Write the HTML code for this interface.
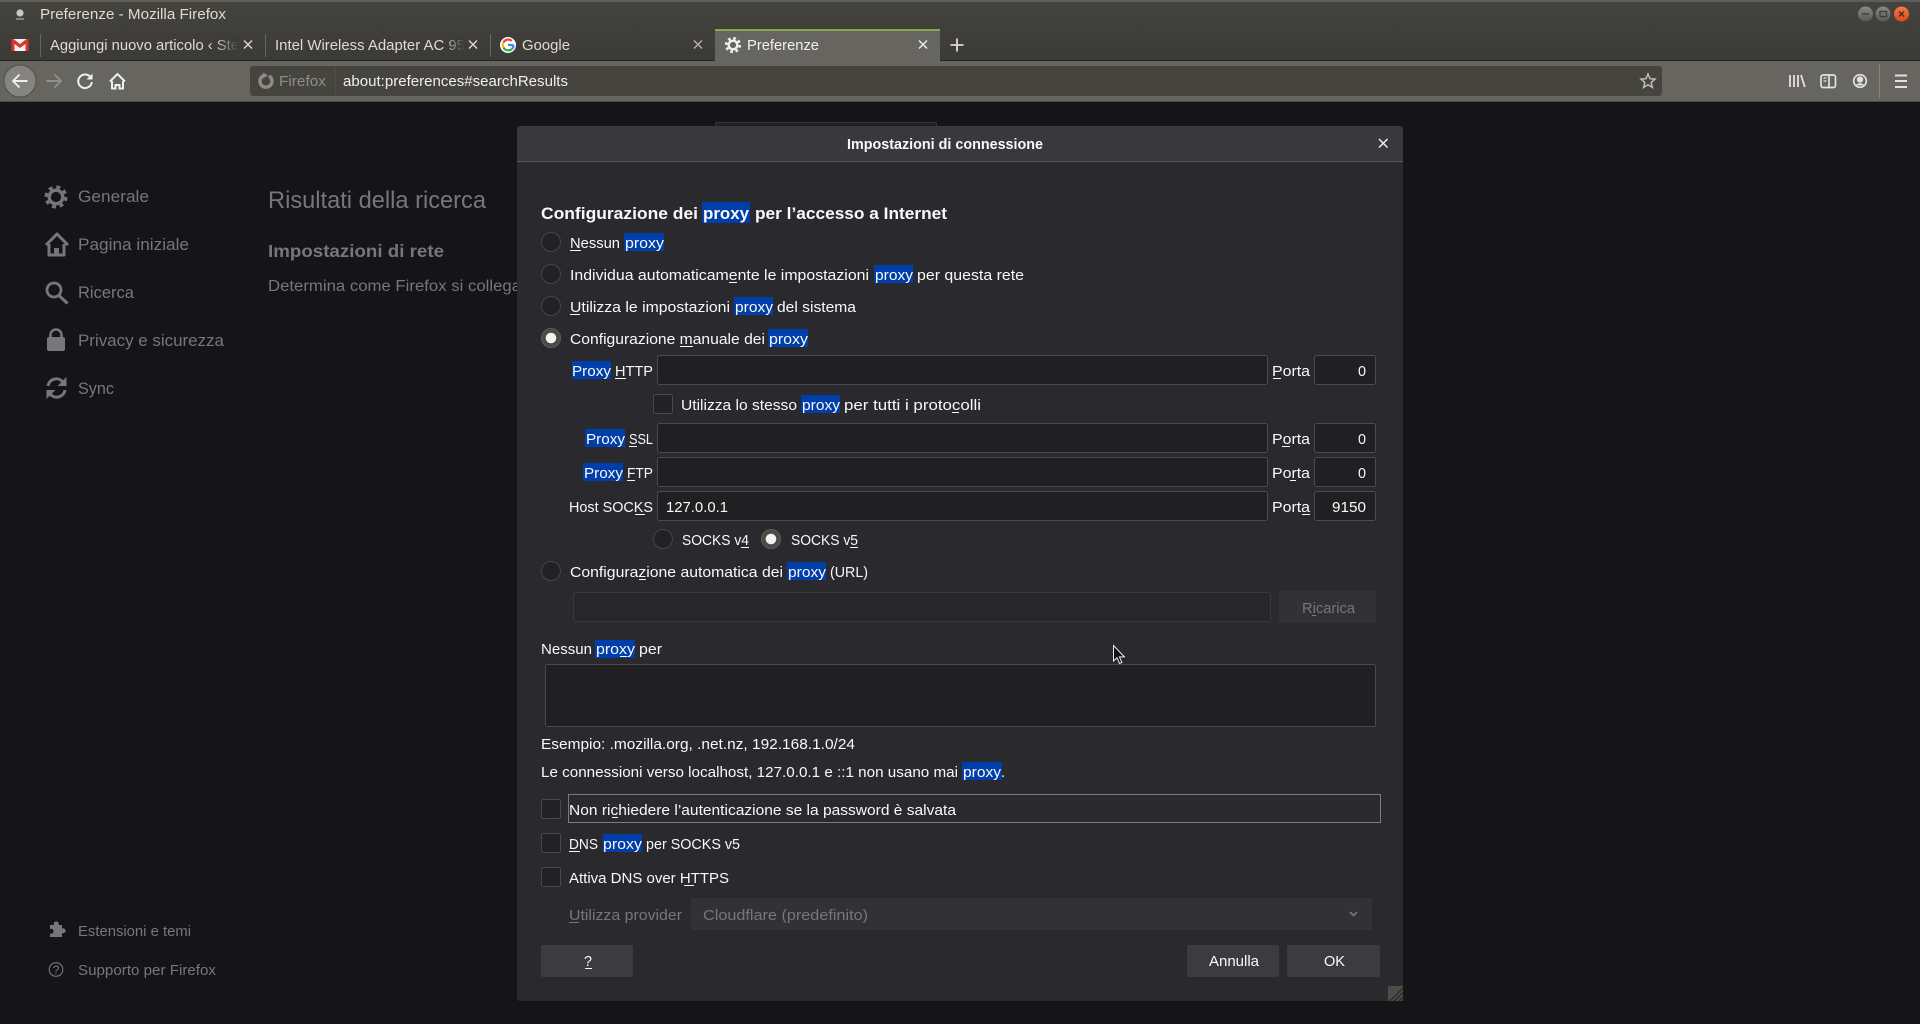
<!DOCTYPE html>
<html lang="it"><head><meta charset="utf-8"><title>Preferenze - Mozilla Firefox</title>
<style>
html,body{margin:0;padding:0;background:#151517;width:1920px;height:1024px;overflow:hidden}
svg{display:block;position:absolute;left:0;top:0}
text{font-family:"Liberation Sans",sans-serif;font-size:15px;fill:#f9f9fa;white-space:pre}
.s{fill:#77777b;font-size:16.5px}
.sm{fill:#77777b;font-size:14.5px}
.t{fill:#dfdbd2;font-size:14.5px}
.b{font-weight:bold}
.h{fill:#003eaa}
.in{fill:#202023;stroke:#4a4a4f}
.dis{fill:#77777b}
.rd{fill:#222225;stroke:#46464a}
.cb{fill:#222225;stroke:#4a4a4e}
.u{fill:#f9f9fa}
</style></head><body>
<svg width="1920" height="1024" viewBox="0 0 1920 1024" xmlns="http://www.w3.org/2000/svg" lengthAdjust="spacingAndGlyphs">
<defs>
<linearGradient id="tb" x1="0" y1="0" x2="0" y2="1"><stop offset="0" stop-color="#45443f"/><stop offset="1" stop-color="#3b3a36"/></linearGradient>
<linearGradient id="fd" x1="0" y1="0" x2="1" y2="0"><stop offset="0" stop-color="#3c3b37" stop-opacity="0"/><stop offset="1" stop-color="#3c3b37"/></linearGradient>
<linearGradient id="wb" x1="0" y1="0" x2="0" y2="1"><stop offset="0" stop-color="#8a8985"/><stop offset="1" stop-color="#5a5954"/></linearGradient>
<linearGradient id="wc" x1="0" y1="0" x2="0" y2="1"><stop offset="0" stop-color="#f47a45"/><stop offset="1" stop-color="#db4a1c"/></linearGradient>
</defs>

<!-- page -->
<rect width="1920" height="1024" fill="#151517"/>

<!-- title bar -->
<rect width="1920" height="61" fill="url(#tb)"/>
<rect width="1920" height="2" y="0" fill="#5e5d58"/>
<circle cx="20" cy="13" r="3.6" fill="#c8c6c0"/><path d="M16 19h8" stroke="#85837d" stroke-width="2"/>
<text x="40" y="19" class="t" textLength="186" lengthAdjust="spacingAndGlyphs">Preferenze - Mozilla Firefox</text>
<circle cx="1865.5" cy="14" r="7.5" fill="url(#wb)"/><path d="M1862 14h7" stroke="#3c3b37" stroke-width="1.4"/>
<circle cx="1883" cy="14" r="7.5" fill="url(#wb)"/><rect x="1880" y="11.5" width="6.5" height="5" fill="none" stroke="#3c3b37" stroke-width="1.2"/>
<circle cx="1901.5" cy="14" r="7.5" fill="url(#wc)"/><path d="M1899 11.5l5 5M1904 11.5l-5 5" stroke="#3c2a20" stroke-width="1.3"/>

<!-- tabs -->
<rect x="13" y="39" width="15" height="12" fill="#f2f2f2"/><path d="M13 39v12h3v-7l5.500 4 5.500-4v7h3v-12h-2l-6.500 5-6.500-5z" fill="#d9372b" transform="translate(-1.500 0)"/>
<rect x="40" y="34" width="1" height="23" fill="#66655f"/>
<rect x="265" y="34" width="1" height="23" fill="#66655f"/>
<rect x="490" y="34" width="1" height="23" fill="#66655f"/>
<text x="50" y="50" class="t" textLength="189" lengthAdjust="spacingAndGlyphs">Aggiungi nuovo articolo ‹ Ste</text>
<rect x="214" y="34" width="25" height="24" fill="url(#fd)"/>
<path d="M244 40.500l8 8M252 40.500l-8 8" stroke="#dfdbd2" stroke-width="1.400"/>
<text x="275" y="50" class="t" textLength="190" lengthAdjust="spacingAndGlyphs">Intel Wireless Adapter AC 95</text>
<rect x="443" y="34" width="22" height="24" fill="url(#fd)"/>
<path d="M469 40.500l8 8M477 40.500l-8 8" stroke="#dfdbd2" stroke-width="1.400"/>
<circle cx="508" cy="45" r="8" fill="#fff"/>
<path d="M508 39.500a5.500 5.500 0 0 1 3.800 1.500" fill="none" stroke="#ea4335" stroke-width="2.200"/>
<path d="M503.500 42.500a5.500 5.500 0 0 1 4.500-3" fill="none" stroke="#ea4335" stroke-width="2.200"/>
<path d="M503.500 47.500a5.500 5.500 0 0 1 0-5" fill="none" stroke="#fbbc05" stroke-width="2.200"/>
<path d="M512 49a5.500 5.500 0 0 1-8.500-1.500" fill="none" stroke="#34a853" stroke-width="2.200"/>
<path d="M513.500 45a5.500 5.500 0 0 1-1.500 4M508 45h5.500" fill="none" stroke="#4285f4" stroke-width="2.200"/>
<text x="522" y="50" class="t" textLength="48" lengthAdjust="spacingAndGlyphs">Google</text>
<path d="M694 40.500l8 8M702 40.500l-8 8" stroke="#b5b2aa" stroke-width="1.400"/>

<rect x="715" y="29" width="225" height="33" fill="#666560"/>
<rect x="715" y="29" width="225" height="2" fill="#87a64f"/>
<g transform="translate(733 45)"><circle r="4.300" fill="none" stroke="#efefef" stroke-width="2.400"/><circle r="6.800" fill="none" stroke="#efefef" stroke-width="2.600" stroke-dasharray="2.670 2.670"/></g>
<text x="747" y="50" class="t" textLength="72" lengthAdjust="spacingAndGlyphs" style="fill:#f2f1ed">Preferenze</text>
<path d="M919 40.500l8 8M927 40.500l-8 8" stroke="#efefef" stroke-width="1.400"/>
<path d="M950.500 45h13M957 38.500v13" stroke="#dfdbd2" stroke-width="1.800"/>

<!-- toolbar -->
<rect y="60" width="715" height="1" fill="#262522"/>
<rect x="940" y="60" width="980" height="1" fill="#262522"/>
<rect y="61" width="1920" height="40" fill="#666560"/>
<rect y="101" width="1920" height="1" fill="#4c4b47"/>
<circle cx="20" cy="81" r="16" fill="#85847f" stroke="#4f4e49"/>
<path d="M27.500 81h-14M19.500 74.500l-6.500 6.500 6.500 6.500" fill="none" stroke="#f0efeb" stroke-width="1.900"/>
<path d="M60.500 81h-14M54.500 74.500l6.500 6.500-6.500 6.500" fill="none" stroke="#908f8a" stroke-width="1.900"/>
<path d="M91 78a6.800 6.800 0 1 0 .8 4" fill="none" stroke="#efefeb" stroke-width="2"/><path d="M92.500 73.500v6h-6z" fill="#efefeb"/>
<path d="M110 81.500l7.500-7.500 7.500 7.500M112 81v7.500h3.500v-3.500h4v3.500h3.500v-7.500" fill="none" stroke="#efefeb" stroke-width="2"/>

<rect x="250" y="66" width="1412" height="30" rx="3" fill="#45443f"/>
<path d="M264 75.500a6 6 0 1 0 5 .5" fill="none" stroke="#8c8b86" stroke-width="3.500"/><path d="M263 72.500l5 3-5 3z" fill="#8c8b86"/>
<text x="279" y="86" class="t" textLength="47" lengthAdjust="spacingAndGlyphs" style="fill:#8f8e89">Firefox</text>
<rect x="335" y="68" width="1" height="26" fill="#4f4e49"/>
<text x="343" y="86" class="t" textLength="225" lengthAdjust="spacingAndGlyphs" style="fill:#f0efeb">about:preferences#searchResults</text>
<path d="M1648 74l2 4.700 5 .4-3.800 3.300 1.200 5-4.400-2.700-4.400 2.700 1.200-5-3.800-3.300 5-.4z" fill="none" stroke="#bdbcb7" stroke-width="1.500"/>

<path d="M1790 75v12M1794 75v12M1798 75v12M1801 75l3.800 12" stroke="#e2e1dd" stroke-width="1.800" fill="none"/>
<rect x="1821" y="75" width="14.500" height="12.500" rx="2" fill="none" stroke="#e2e1dd" stroke-width="1.700"/><path d="M1829 75v12.500" stroke="#e2e1dd" stroke-width="1.700"/><path d="M1823.500 78h3M1823.500 81h3" stroke="#e2e1dd" stroke-width="1.300"/>
<circle cx="1860" cy="81" r="6.300" fill="none" stroke="#e2e1dd" stroke-width="1.700"/><circle cx="1860" cy="79.500" r="3.200" fill="#e2e1dd"/><path d="M1855.500 85.500a5 4 0 0 1 9 0z" fill="#e2e1dd"/>
<rect x="1879" y="64" width="1" height="34" fill="#85847f"/>
<path d="M1895 75.500h12M1895 81h12M1895 87h12" stroke="#e2e1dd" stroke-width="1.900"/>

<!-- sidebar -->
<g transform="translate(56 197)"><circle r="6.800" fill="none" stroke="#77777b" stroke-width="3.400"/><circle r="10" fill="none" stroke="#77777b" stroke-width="3" stroke-dasharray="3.930 3.930"/></g>
<text x="78" y="202" class="s" textLength="71" lengthAdjust="spacingAndGlyphs">Generale</text>
<path d="M46 245l11-11 11 11M49 244v11h15v-11" fill="none" stroke="#77777b" stroke-width="3" stroke-linejoin="round"/><rect x="54" y="248" width="5" height="7" fill="#77777b"/>
<text x="78" y="250" class="s" textLength="111" lengthAdjust="spacingAndGlyphs">Pagina iniziale</text>
<circle cx="54" cy="290" r="7" fill="none" stroke="#77777b" stroke-width="2.800"/><path d="M59 295.500l8.500 8" stroke="#77777b" stroke-width="3"/>
<text x="78" y="298" class="s" textLength="56" lengthAdjust="spacingAndGlyphs">Ricerca</text>
<rect x="47" y="337" width="18" height="14" rx="2" fill="#77777b"/><path d="M50.500 338v-3a5.500 5.500 0 0 1 11 0v3" fill="none" stroke="#77777b" stroke-width="2.600"/>
<text x="78" y="346" class="s" textLength="146" lengthAdjust="spacingAndGlyphs">Privacy e sicurezza</text>
<path d="M48 386a8.500 8.500 0 0 1 15-4" fill="none" stroke="#77777b" stroke-width="3"/><path d="M66.500 377v9h-9z" fill="#77777b"/>
<path d="M65 390a8.500 8.500 0 0 1-15 4" fill="none" stroke="#77777b" stroke-width="3"/><path d="M46.500 399v-9h9z" fill="#77777b"/>
<text x="78" y="394" class="s" textLength="36" lengthAdjust="spacingAndGlyphs">Sync</text>

<text x="268" y="208" textLength="218" lengthAdjust="spacingAndGlyphs" style="font-size:24px;fill:#77777b">Risultati della ricerca</text>
<text x="268" y="257" class="b" textLength="176" lengthAdjust="spacingAndGlyphs" style="font-size:17.500px;fill:#77777b">Impostazioni di rete</text>
<text x="268" y="291" textLength="253" lengthAdjust="spacingAndGlyphs" style="font-size:15.500px;fill:#77777b">Determina come Firefox si collega</text>

<path d="M50 925h4a2.500 2.500 0 1 1 4.500 0h3.500v3.500a2.500 2.500 0 1 1 0 4.500v4h-12v-3.500a2.500 2.500 0 1 0 0-4.500z" fill="#77777b"/>
<text x="78" y="936" class="sm" textLength="113" lengthAdjust="spacingAndGlyphs">Estensioni e temi</text>
<circle cx="56" cy="969.500" r="6.800" fill="none" stroke="#77777b" stroke-width="1.100"/>
<text x="52.700" y="974" style="font-size:12px;fill:#77777b">?</text>
<text x="78" y="975" class="sm" textLength="138" lengthAdjust="spacingAndGlyphs">Supporto per Firefox</text>

<!-- box behind dialog -->
<rect x="715.500" y="122.500" width="221" height="20" rx="2" fill="#202023" stroke="#38383d"/>

<!-- dialog -->
<rect x="517" y="126" width="886" height="875" rx="3" fill="#2a2a2e"/>
<path d="M517 161v-32a3 3 0 0 1 3-3h880a3 3 0 0 1 3 3v32z" fill="#38383d"/>
<rect x="517" y="161" width="886" height="1" fill="#57575b"/>
<text x="847" y="149" class="b" textLength="196" lengthAdjust="spacingAndGlyphs" style="font-size:14.500px">Impostazioni di connessione</text>
<path d="M1379 139l8.500 8.500M1387.500 139l-8.500 8.500" stroke="#f0f0f1" stroke-width="1.500"/>

<!-- highlights -->
<rect class="h" x="702" y="202" width="48" height="21"/>
<rect class="h" x="624" y="233" width="40" height="18"/>
<rect class="h" x="874" y="265" width="39" height="18"/>
<rect class="h" x="734" y="297" width="39" height="18"/>
<rect class="h" x="768" y="329" width="40" height="18"/>
<rect class="h" x="572" y="361" width="39" height="18"/>
<rect class="h" x="801" y="395" width="39" height="18"/>
<rect class="h" x="585" y="429" width="40" height="18"/>
<rect class="h" x="583" y="463" width="40" height="18"/>
<rect class="h" x="787" y="562" width="39" height="18"/>
<rect class="h" x="595" y="640" width="40" height="18"/>
<rect class="h" x="962" y="762" width="40" height="18"/>
<rect class="h" x="603" y="834" width="39" height="18"/>

<g class="b">
<text class="b" x="541" y="219" textLength="157" lengthAdjust="spacingAndGlyphs" style="font-size:17px">Configurazione dei</text>
<text class="b" x="703" y="219" textLength="46" lengthAdjust="spacingAndGlyphs" style="font-size:17px">proxy</text>
<text class="b" x="755" y="219" textLength="192" lengthAdjust="spacingAndGlyphs" style="font-size:17px">per l’accesso a Internet</text>
</g>

<!-- radios -->
<circle class="rd" cx="551" cy="242" r="9.500"/>
<circle class="rd" cx="551" cy="274" r="9.500"/>
<circle class="rd" cx="551" cy="306" r="9.500"/>
<circle cx="551" cy="338" r="9.500" fill="#4b4a45" stroke="#5c5b57"/><circle cx="551" cy="338" r="5.300" fill="#f2f2f2"/>

<text x="570" y="248" textLength="50" lengthAdjust="spacingAndGlyphs">Nessun</text>
<text x="625" y="248" textLength="39" lengthAdjust="spacingAndGlyphs">proxy</text>
<rect class="u" x="570" y="250" width="11" height="1"/>
<text x="570" y="280" textLength="299" lengthAdjust="spacingAndGlyphs">Individua automaticamente le impostazioni</text>
<text x="875" y="280" textLength="38" lengthAdjust="spacingAndGlyphs">proxy</text>
<text x="917" y="280" textLength="107" lengthAdjust="spacingAndGlyphs">per questa rete</text>
<rect class="u" x="729" y="282" width="8" height="1"/>
<text x="570" y="312" textLength="160" lengthAdjust="spacingAndGlyphs">Utilizza le impostazioni</text>
<text x="735" y="312" textLength="38" lengthAdjust="spacingAndGlyphs">proxy</text>
<text x="777" y="312" textLength="79" lengthAdjust="spacingAndGlyphs">del sistema</text>
<rect class="u" x="570" y="314" width="10" height="1"/>
<text x="570" y="344" textLength="195" lengthAdjust="spacingAndGlyphs">Configurazione manuale dei</text>
<text x="769" y="344" textLength="39" lengthAdjust="spacingAndGlyphs">proxy</text>
<rect class="u" x="680" y="346" width="13" height="1"/>

<!-- proxy rows -->
<text x="572" y="376" textLength="39" lengthAdjust="spacingAndGlyphs">Proxy</text>
<text x="615" y="376" textLength="38" lengthAdjust="spacingAndGlyphs">HTTP</text>
<rect class="u" x="615" y="378" width="11" height="1"/>
<rect class="in" x="657.500" y="355.500" width="610" height="29" rx="2"/>
<text x="1272" y="376" textLength="38" lengthAdjust="spacingAndGlyphs">Porta</text>
<rect class="u" x="1273" y="378" width="8" height="1"/>
<rect class="in" x="1314.500" y="355.500" width="61" height="29" rx="2"/>
<text x="1358" y="376" textLength="8" lengthAdjust="spacingAndGlyphs">0</text>

<rect class="cb" x="653.500" y="394.500" width="19" height="19" rx="2"/>
<text x="681" y="410" textLength="116" lengthAdjust="spacingAndGlyphs">Utilizza lo stesso</text>
<text x="802" y="410" textLength="38" lengthAdjust="spacingAndGlyphs">proxy</text>
<text x="844" y="410" textLength="137" lengthAdjust="spacingAndGlyphs">per tutti i protocolli</text>
<rect class="u" x="952" y="412" width="7" height="1"/>

<text x="586" y="444" textLength="39" lengthAdjust="spacingAndGlyphs">Proxy</text>
<text x="629" y="444" textLength="24" lengthAdjust="spacingAndGlyphs">SSL</text>
<rect class="u" x="629" y="446" width="8" height="1"/>
<rect class="in" x="657.500" y="423.500" width="610" height="29" rx="2"/>
<text x="1272" y="444" textLength="38" lengthAdjust="spacingAndGlyphs">Porta</text>
<rect class="u" x="1282" y="446" width="8" height="1"/>
<rect class="in" x="1314.500" y="423.500" width="61" height="29" rx="2"/>
<text x="1358" y="444" textLength="8" lengthAdjust="spacingAndGlyphs">0</text>

<text x="584" y="478" textLength="39" lengthAdjust="spacingAndGlyphs">Proxy</text>
<text x="627" y="478" textLength="26" lengthAdjust="spacingAndGlyphs">FTP</text>
<rect class="u" x="627" y="480" width="8" height="1"/>
<rect class="in" x="657.500" y="457.500" width="610" height="29" rx="2"/>
<text x="1272" y="478" textLength="38" lengthAdjust="spacingAndGlyphs">Porta</text>
<rect class="u" x="1290" y="480" width="6" height="1"/>
<rect class="in" x="1314.500" y="457.500" width="61" height="29" rx="2"/>
<text x="1358" y="478" textLength="8" lengthAdjust="spacingAndGlyphs">0</text>

<text x="569" y="512" textLength="84" lengthAdjust="spacingAndGlyphs">Host SOCKS</text>
<rect class="u" x="635" y="514" width="10" height="1"/>
<rect class="in" x="657.500" y="491.500" width="610" height="29" rx="2"/>
<text x="666" y="512" textLength="62" lengthAdjust="spacingAndGlyphs">127.0.0.1</text>
<text x="1272" y="512" textLength="38" lengthAdjust="spacingAndGlyphs">Porta</text>
<rect class="u" x="1302" y="514" width="8" height="1"/>
<rect class="in" x="1314.500" y="491.500" width="61" height="29" rx="2"/>
<text x="1332" y="512" textLength="34" lengthAdjust="spacingAndGlyphs">9150</text>

<circle class="rd" cx="663" cy="539" r="9.500"/>
<text x="682" y="545" textLength="67" lengthAdjust="spacingAndGlyphs">SOCKS v4</text>
<rect class="u" x="741" y="547" width="8" height="1"/>
<circle cx="771" cy="539" r="9.500" fill="#4b4a45" stroke="#5c5b57"/><circle cx="771" cy="539" r="5.300" fill="#f2f2f2"/>
<text x="791" y="545" textLength="67" lengthAdjust="spacingAndGlyphs">SOCKS v5</text>
<rect class="u" x="850" y="547" width="8" height="1"/>

<circle class="rd" cx="551" cy="571" r="9.500"/>
<text x="570" y="577" textLength="213" lengthAdjust="spacingAndGlyphs">Configurazione automatica dei</text>
<text x="788" y="577" textLength="38" lengthAdjust="spacingAndGlyphs">proxy</text>
<text x="830" y="577" textLength="38" lengthAdjust="spacingAndGlyphs">(URL)</text>
<rect class="u" x="639" y="579" width="7" height="1"/>
<rect x="573.500" y="592.500" width="697" height="29" rx="2" fill="#27272a" stroke="#39393d"/>
<rect x="1279" y="591" width="97" height="32" rx="2" fill="#323235"/>
<text x="1302" y="613" class="dis" textLength="53" lengthAdjust="spacingAndGlyphs">Ricarica</text>
<rect x="1312" y="615" width="4" height="1" fill="#77777b"/>

<text x="541" y="654" textLength="51" lengthAdjust="spacingAndGlyphs">Nessun</text>
<text x="596" y="654" textLength="39" lengthAdjust="spacingAndGlyphs">proxy</text>
<text x="639" y="654" textLength="23" lengthAdjust="spacingAndGlyphs">per</text>
<rect class="u" x="620" y="656" width="7" height="1"/>
<rect class="in" x="545.500" y="664.500" width="830" height="62" rx="2"/>

<text x="541" y="749" textLength="314" lengthAdjust="spacingAndGlyphs">Esempio: .mozilla.org, .net.nz, 192.168.1.0/24</text>
<text x="541" y="777" textLength="417" lengthAdjust="spacingAndGlyphs">Le connessioni verso localhost, 127.0.0.1 e ::1 non usano mai</text>
<text x="963" y="777" textLength="38" lengthAdjust="spacingAndGlyphs">proxy</text>
<text x="1001" y="777">.</text>

<rect x="568.500" y="794.500" width="812" height="28" fill="none" stroke="#cfcfd0" stroke-dasharray="1 1" shape-rendering="crispEdges"/>
<rect class="cb" x="541.500" y="799.500" width="19" height="19" rx="2"/>
<text x="569" y="815" textLength="387" lengthAdjust="spacingAndGlyphs">Non richiedere l’autenticazione se la password è salvata</text>
<rect class="u" x="612" y="817" width="6" height="1"/>
<rect class="cb" x="541.500" y="833.500" width="19" height="19" rx="2"/>
<text x="569" y="849" textLength="29" lengthAdjust="spacingAndGlyphs">DNS</text>
<text x="603" y="849" textLength="39" lengthAdjust="spacingAndGlyphs">proxy</text>
<text x="646" y="849" textLength="94" lengthAdjust="spacingAndGlyphs">per SOCKS v5</text>
<rect class="u" x="569" y="851" width="11" height="1"/>
<rect class="cb" x="541.500" y="867.500" width="19" height="19" rx="2"/>
<text x="569" y="883" textLength="160" lengthAdjust="spacingAndGlyphs">Attiva DNS over HTTPS</text>
<rect class="u" x="684" y="885" width="10" height="1"/>

<text x="569" y="920" class="dis" textLength="113" lengthAdjust="spacingAndGlyphs">Utilizza provider</text>
<rect x="569" y="922" width="10" height="1" fill="#77777b"/>
<rect x="691" y="898" width="681" height="32" rx="2" fill="#323235"/>
<text x="703" y="920" class="dis" textLength="165" lengthAdjust="spacingAndGlyphs">Cloudflare (predefinito)</text>
<path d="M1350 912l3.500 3.500 3.500-3.500" fill="none" stroke="#77777b" stroke-width="1.800"/>

<rect x="541" y="945" width="92" height="32" rx="2" fill="#3c3c40"/>
<text x="584" y="966" textLength="8" lengthAdjust="spacingAndGlyphs">?</text>
<rect class="u" x="585" y="968" width="7" height="1"/>
<rect x="1187" y="945" width="92" height="32" rx="2" fill="#3c3c40"/>
<text x="1209" y="966" textLength="50" lengthAdjust="spacingAndGlyphs">Annulla</text>
<rect x="1287" y="945" width="93" height="32" rx="2" fill="#3c3c40"/>
<text x="1324" y="966" textLength="21" lengthAdjust="spacingAndGlyphs">OK</text>

<rect x="1388" y="986" width="15" height="15" fill="#4d4c45"/>
<path d="M1390 1001l13-13M1394.500 1001l8.500-8.500M1399 1001l4-4" stroke="#2a2a2e" stroke-width="1.300"/>

<!-- cursor -->
<path d="M1113.500 645.500v15.500l3.500-3.300 2.500 5.800 2.400-1-2.500-5.600h5z" fill="#111" stroke="#eee" stroke-width="1"/>
</svg>
</body></html>
